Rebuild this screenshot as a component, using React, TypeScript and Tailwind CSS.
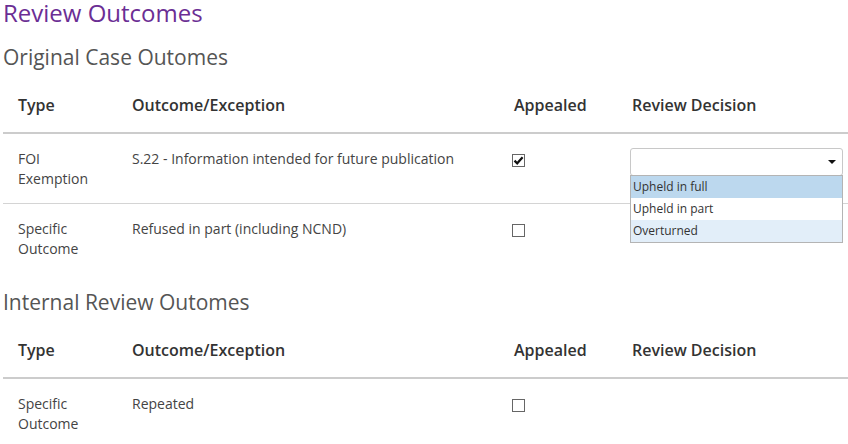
import React from "react";

type Row = {
  type: string;
  outcome: string;
  appealed: boolean;
  decision?: boolean;
};

const original: Row[] = [
  { type: "FOI Exemption", outcome: "S.22 - Information intended for future publication", appealed: true, decision: true },
  { type: "Specific Outcome", outcome: "Refused in part (including NCND)", appealed: false },
];

const internal: Row[] = [{ type: "Specific Outcome", outcome: "Repeated", appealed: false }];

const cols = "grid grid-cols-[114px_382px_118px_1fr]";

function Checkbox({ checked }: { checked: boolean }) {
  return (
    <span className="mt-[5px] ml-[-2px] flex h-[13px] w-[13px] items-center justify-center border border-[#666] bg-white">
      {checked && (
        <svg width="11" height="11" viewBox="0 0 11 11">
          <path d="M1.5 5.6 L4.2 8.3 L9.6 2.2" fill="none" stroke="#111" strokeWidth="2.2" />
        </svg>
      )}
    </span>
  );
}

function DecisionSelect() {
  const options = ["Upheld in full", "Upheld in part", "Overturned"];
  const bg = ["bg-[#bcd8ee]", "bg-white", "bg-[#e2eef9]"];
  return (
    <div className="relative ml-[-2px] mt-[-1px] h-[28px] w-[213px]">
      <div className="flex h-[28px] items-center justify-end rounded-[3px] border border-[#c8c8c8] bg-white pr-[6px]">
        <svg width="8" height="4" viewBox="0 0 8 4">
          <path d="M0 0 H8 L4 4 Z" fill="#111" />
        </svg>
      </div>
      <div className="absolute left-0 right-0 top-[27px] z-10 border border-[#b4b4b4] bg-white">
        {options.map((o, i) => (
          <div key={o} className={`h-[22px] pl-[2px] text-[12px] leading-[22px] text-[#333] ${bg[i]}`}>
            {o}
          </div>
        ))}
      </div>
    </div>
  );
}

function OutcomeTable({ rows }: { rows: Row[] }) {
  return (
    <div>
      <div className={`${cols} border-b-2 border-[#cccccc] pb-[15px] pt-[15px] text-[16px] font-semibold leading-[23px] text-[#333]`}>
        <div className="pl-[15px]">Type</div>
        <div className="pl-[15px]">Outcome/Exception</div>
        <div className="pl-[15px]">Appealed</div>
        <div className="pl-[15px]">Review Decision</div>
      </div>
      {rows.map((r, i) => (
        <div
          key={i}
          className={`${cols} pb-[14px] pt-[15px] text-[14px] leading-[20px] text-[#444] ${i > 0 ? "border-t border-[#d4d4d4]" : ""}`}
        >
          <div className="pl-[15px] pr-[15px]">{r.type}</div>
          <div className="pl-[15px] pr-[15px]">{r.outcome}</div>
          <div className="pl-[15px]">
            <Checkbox checked={r.appealed} />
          </div>
          <div className="pl-[15px]">{r.decision && <DecisionSelect />}</div>
        </div>
      ))}
    </div>
  );
}

export default function App() {
  return (
    <div className="h-[444px] w-[848px] overflow-hidden bg-white pl-[3px] font-['Open_Sans',sans-serif]">
      <h1 className="text-[24px] leading-[26px] text-[#6b2e94]">Review Outcomes</h1>
      <h2 className="mt-[20px] text-[21px] leading-[22px] text-[#555]">Original Case Outomes</h2>
      <div className="mt-[11px]">
        <OutcomeTable rows={original} />
      </div>
      <h2 className="mt-[18px] text-[21px] leading-[23px] text-[#555]">Internal Review Outomes</h2>
      <div className="mt-[10px]">
        <OutcomeTable rows={internal} />
      </div>
    </div>
  );
}
